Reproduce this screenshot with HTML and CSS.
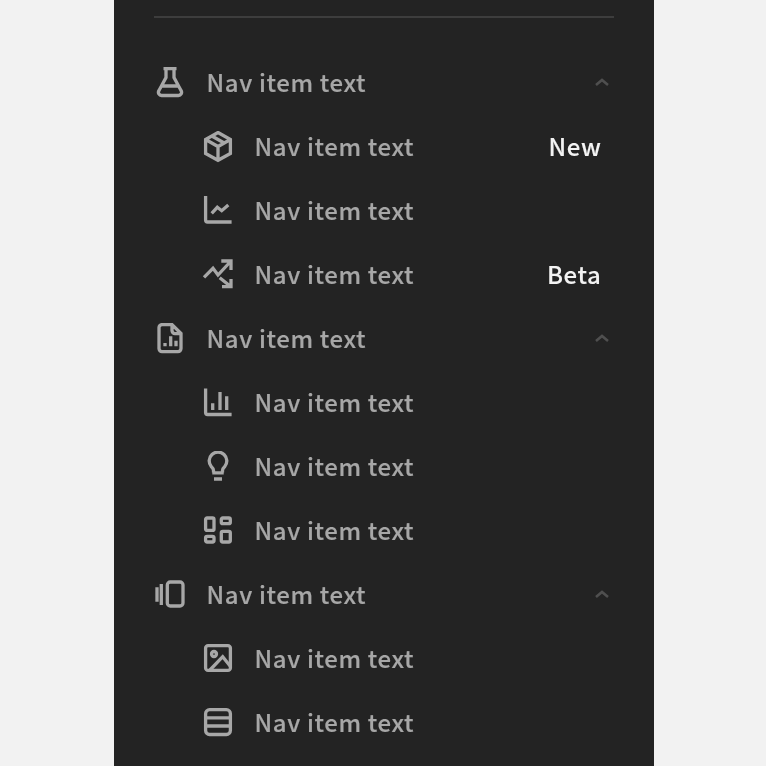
FILE: index.html

```html
<!DOCTYPE html>
<html>
    <head>
        <meta charset="utf-8">
        <title>Side nav</title>
        <link rel="stylesheet" href="styles.css">
    </head>
    <body>
        <nav class="sidenav">
            <hr class="sidenav__rule">

            <div class="nav-item">
                <svg class="nav-item__icon" viewBox="0 0 32 32"><path d="M9.500 1.500h13M12 1.500v9L5 23.500a3.200 3.200 0 0 0 2.800 5h16.400a3.200 3.200 0 0 0 2.800-5L20 10.500v-9M8 19h16"/></svg>
                <span class="nav-item__text">Nav item text</span>
                <svg class="nav-item__chevron" viewBox="0 0 24 24"><path d="M6 14l6-5 6 5"/></svg>
            </div>
            <div class="nav-item nav-item--sub">
                <svg class="nav-item__icon" viewBox="0 0 32 32"><path d="M16 1.500L28.400 8.500V22.500L16 29.300 3.600 22.500V8.500zM3.600 8.500L16 15.500 28.400 8.500M16 15.500V29.300M9.800 5L22.200 12"/></svg>
                <span class="nav-item__text">Nav item text</span>
                <span class="nav-item__tag">New</span>
            </div>
            <div class="nav-item nav-item--sub">
                <svg class="nav-item__icon" viewBox="0 0 32 32"><path d="M3.600 1v24a2 2 0 0 0 2 2h24M9.700 18.300l5.600-6 4.400 3.400 6.600-5.700"/></svg>
                <span class="nav-item__text">Nav item text</span>
            </div>
            <div class="nav-item nav-item--sub">
                <svg class="nav-item__icon" viewBox="0 0 32 32"><path d="M2 18.300L11 9.300l5 6.700L29 2M19.300 2H29v9M17.700 18.700L29 27.700M20 27.700h9V20"/></svg>
                <span class="nav-item__text">Nav item text</span>
                <span class="nav-item__tag">Beta</span>
            </div>

            <div class="nav-item">
                <svg class="nav-item__icon" viewBox="0 0 32 32"><path d="M18 1.600H8a3 3 0 0 0-3 3v21a3 3 0 0 0 3 3h16a3 3 0 0 0 3-3V10.500zM18 1.600v6a3 3 0 0 0 3 3h6M11 20v3.300M16.700 13.300v10M22 17.700v5.600"/></svg>
                <span class="nav-item__text">Nav item text</span>
                <svg class="nav-item__chevron" viewBox="0 0 24 24"><path d="M6 14l6-5 6 5"/></svg>
            </div>
            <div class="nav-item nav-item--sub">
                <svg class="nav-item__icon" viewBox="0 0 32 32"><path d="M3.600 1.500v24a2 2 0 0 0 2 2h24M10.700 16.300V23M18 5v18M24.700 9.300V23"/></svg>
                <span class="nav-item__text">Nav item text</span>
            </div>
            <div class="nav-item nav-item--sub">
                <svg class="nav-item__icon" viewBox="0 0 32 32"><path d="M11.500 21.500v-2c0-1.500-.8-2.600-2.300-4a8.800 8.800 0 1 1 13.600 0c-1.500 1.400-2.300 2.500-2.300 4v2M10.300 21.800h11.400M12 28h8"/></svg>
                <span class="nav-item__text">Nav item text</span>
            </div>
            <div class="nav-item nav-item--sub">
                <svg class="nav-item__icon" viewBox="0 0 32 32"><rect x="3.600" y="3" width="8.400" height="12.400" rx="1.500"/><rect x="19.300" y="3" width="9" height="5.700" rx="1.500"/><rect x="3.600" y="21.300" width="8.400" height="5.700" rx="1.500"/><rect x="19.300" y="16.300" width="9" height="10.700" rx="1.500"/></svg>
                <span class="nav-item__text">Nav item text</span>
            </div>

            <div class="nav-item">
                <svg class="nav-item__icon" viewBox="0 0 32 32"><rect x="13.300" y="3" width="15.700" height="24" rx="3"/><path d="M3 8.300v14.400M7.300 5v21"/></svg>
                <span class="nav-item__text">Nav item text</span>
                <svg class="nav-item__chevron" viewBox="0 0 24 24"><path d="M6 14l6-5 6 5"/></svg>
            </div>
            <div class="nav-item nav-item--sub">
                <svg class="nav-item__icon" viewBox="0 0 32 32"><rect x="3.600" y="2.600" width="24.800" height="24.800" rx="2.500"/><circle cx="12" cy="11" r="2.500"/><path d="M8 27L20.700 13.700 28.700 23.700"/></svg>
                <span class="nav-item__text">Nav item text</span>
            </div>
            <div class="nav-item nav-item--sub">
                <svg class="nav-item__icon" viewBox="0 0 32 32"><rect x="3.600" y="2.700" width="24.800" height="24.800" rx="4"/><path d="M3.600 10.800h24.800M3.600 19h24.800"/></svg>
                <span class="nav-item__text">Nav item text</span>
            </div>
        </nav>
    </body>
</html>
```

FILE: styles.css

```css
:root {
    --font-main: 'Noto Sans CJK KR', 'Noto Sans', sans-serif;

    --color-page: #f2f2f2;
    --color-panel: #232323;
    --color-rule: #3d3d3d;
    --color-white: #fff;
}
html, body {
    height: 100%;
    margin: 0;
    overflow: hidden;
}
body {
    background-color: var(--color-page);
    font-family: var(--font-main);
}
.sidenav {
    box-sizing: border-box;
    width: 540px;
    height: 766px;
    margin-left: 114px;
    padding: 16px 40px 0;
    background-color: var(--color-panel);
    overflow: hidden;
}
.sidenav__rule {
    height: 2px;
    margin: 0 0 33px;
    border: 0;
    background-color: var(--color-rule);
}
.nav-item {
    display: flex;
    align-items: center;
    gap: 20px;
    height: 64px;
    color: var(--color-white);
    font-size: 24px;
    font-weight: 500;
    letter-spacing: 0.64px;
    -webkit-text-stroke: 0.12px;
}
.nav-item--sub {
    padding-left: 48px;
}
.nav-item__icon {
    flex: none;
    width: 32px;
    height: 32px;
    fill: none;
    stroke: var(--color-white);
    stroke-width: 3.3;
    opacity: 0.6;
}
.nav-item__text {
    flex: 1;
    padding: 0 0 4px 0.5px;
    opacity: 0.6;
    will-change: opacity;
}
.nav-item__chevron {
    flex: none;
    width: 24px;
    height: 24px;
    fill: none;
    stroke: var(--color-white);
    stroke-width: 2.5;
    opacity: 0.2;
}
.nav-item__tag {
    padding: 0 12.5px 4px 0;
    opacity: 0.95;
    will-change: opacity;
}
```
